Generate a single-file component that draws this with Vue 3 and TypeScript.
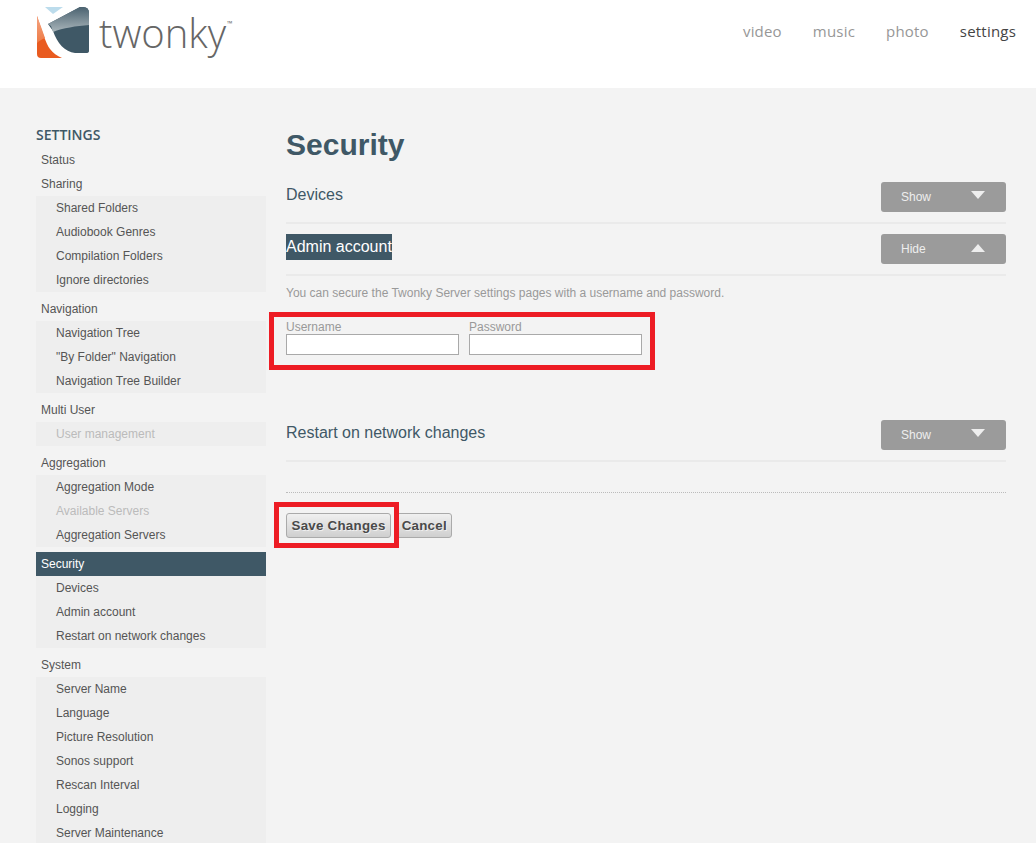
<script setup lang="ts">
interface Group {
  label: string
  active?: boolean
  items?: { label: string; disabled?: boolean }[]
}
const groups: Group[] = [
  { label: 'Status' },
  { label: 'Sharing', items: [{ label: 'Shared Folders' }, { label: 'Audiobook Genres' }, { label: 'Compilation Folders' }, { label: 'Ignore directories' }] },
  { label: 'Navigation', items: [{ label: 'Navigation Tree' }, { label: '"By Folder" Navigation' }, { label: 'Navigation Tree Builder' }] },
  { label: 'Multi User', items: [{ label: 'User management', disabled: true }] },
  { label: 'Aggregation', items: [{ label: 'Aggregation Mode' }, { label: 'Available Servers', disabled: true }, { label: 'Aggregation Servers' }] },
  { label: 'Security', active: true, items: [{ label: 'Devices' }, { label: 'Admin account' }, { label: 'Restart on network changes' }] },
  { label: 'System', items: [{ label: 'Server Name' }, { label: 'Language' }, { label: 'Picture Resolution' }, { label: 'Sonos support' }, { label: 'Rescan Interval' }, { label: 'Logging' }, { label: 'Server Maintenance' }] },
]
const nav = ['video', 'music', 'photo', 'settings']
</script>

<template>
  <div class="page">
    <header class="top">
      <div class="logo">
        <svg class="mark" width="54" height="53" viewBox="36 6 54 53">
          <defs>
            <linearGradient id="gr" x1="0" y1="0" x2="0" y2="1">
              <stop offset="0" stop-color="#4a6270" />
              <stop offset="1" stop-color="#a9b5ba" />
            </linearGradient>
            <linearGradient id="or" x1="0" y1="0" x2="0" y2="1">
              <stop offset="0" stop-color="#f4a582" />
              <stop offset="1" stop-color="#ee7a45" />
            </linearGradient>
          </defs>
          <path d="M45 7H63L53 14Z" fill="#bcdcec" />
          <path d="M48 24L80 7H83Q89 7 89 13V51Q89 53 86 53H75C65 52 57 43 53 31Z" fill="#3f5866" />
          <path d="M48 24L80 7H83Q89 7 89 13V25C76 26 63 28 53 32L51 26Z" fill="url(#gr)" />
          <path d="M37 16C41 28 46 44 50 49C53 53 57 56 62 58H41Q37 58 37 54Z" fill="#e95b20" />
          <path d="M37 16C40 24 43 32 45 38C42 39 39 41 37 43Z" fill="url(#or)" />
        </svg>
        <span class="word">twonky<sup class="tm">™</sup></span>
      </div>
      <nav class="nav">
        <a v-for="n in nav" :key="n" :class="{ on: n === 'settings' }">{{ n }}</a>
      </nav>
    </header>

    <div class="body">
      <aside class="side">
        <h3 class="side-title">SETTINGS</h3>
        <div v-for="g in groups" :key="g.label" class="group">
          <div class="row" :class="{ active: g.active }">{{ g.label }}</div>
          <div v-if="g.items" class="sub">
            <div v-for="i in g.items" :key="i.label" class="subrow" :class="{ off: i.disabled }">{{ i.label }}</div>
          </div>
        </div>
      </aside>

      <main class="main">
        <h1 class="title">Security</h1>

        <section class="sec first">
          <span class="sec-name">Devices</span>
          <button class="toggle"><span>Show</span><i class="tri down"></i></button>
        </section>

        <section class="sec second">
          <span class="sec-name picked">Admin account</span>
          <button class="toggle"><span>Hide</span><i class="tri up"></i></button>
        </section>

        <p class="hint">You can secure the Twonky Server settings pages with a username and password.</p>

        <div class="fields">
          <label class="field"><span>Username</span><input type="text" /></label>
          <label class="field"><span>Password</span><input type="password" /></label>
        </div>

        <section class="sec third">
          <span class="sec-name">Restart on network changes</span>
          <button class="toggle"><span>Show</span><i class="tri down"></i></button>
        </section>

        <div class="dots"></div>

        <div class="actions">
          <button class="act">Save Changes</button>
          <button class="act">Cancel</button>
        </div>
      </main>
    </div>

    <div class="mark-box box-a"></div>
    <div class="mark-box box-b"></div>
  </div>
</template>

<style>
html, body { margin: 0; overflow: hidden; background: #f3f3f3; }
</style>

<style scoped>
.page {
  position: relative;
  height: 843px;
  overflow: hidden;
  background: #f3f3f3;
  font-family: "Liberation Sans", Arial, sans-serif;
}
.top {
  height: 88px;
  background: #fff;
  display: flex;
  justify-content: space-between;
  align-items: flex-start;
  padding: 0 20px 0 36px;
}
.logo { display: flex; align-items: flex-start; padding-top: 6px; }
.mark { display: block; }
.word {
  font-family: "Open Sans", sans-serif;
  font-weight: 300;
  font-size: 40px;
  line-height: 54px;
  color: #666;
  margin-left: 9px;
  margin-top: 0;
  position: relative;
}
.tm { position: absolute; font-size: 7px; line-height: 8px; top: 14px; left: 128px; font-weight: 400; }
.nav { display: flex; gap: 31px; padding-top: 21px; }
.nav a {
  font-family: "Open Sans", sans-serif;
  font-size: 15px;
  line-height: 20px;
  color: #979797;
  letter-spacing: 0.2px;
}
.nav a.on { color: #444; }

.body { display: flex; padding: 0 30px 0 36px; }
.side { width: 230px; flex: none; margin-right: 20px; padding-top: 36px; }
.side-title {
  margin: 0 0 2px;
  font-family: "Open Sans", sans-serif;
  font-size: 14px;
  font-weight: 600;
  line-height: 22px;
  color: #3f5866;
}
.group { margin-bottom: 5px; }
.group:nth-child(2) { margin-bottom: 0; }
.row, .subrow { height: 24px; line-height: 24px; font-size: 12px; color: #555; }
.row { padding-left: 5px; }
.row.active { background: #3f5866; color: #fff; }
.sub { background: #eeeeee; }
.subrow { padding-left: 20px; }
.subrow.off { color: #bbb; }

.main { flex: 1; min-width: 0; }
.title {
  margin: 0;
  padding-top: 38px;
  font-size: 30px;
  line-height: 38px;
  font-weight: 700;
  color: #3f5866;
}
.sec {
  display: flex;
  justify-content: space-between;
  align-items: flex-start;
  border-bottom: 2px solid #eaeaea;
  padding-bottom: 10px;
}
.sec.first { margin-top: 18px; }
.sec.second { margin-top: 10px; }
.sec.third { margin-top: 65px; }
.sec-name { font-size: 16px; line-height: 26px; color: #3f5866; }
.sec-name.picked { background: #3f5866; color: #fff; }
.toggle {
  width: 125px;
  height: 30px;
  border: 0;
  border-radius: 3px;
  background: #9b9b9b;
  color: #eee;
  font: 12px "Liberation Sans", Arial, sans-serif;
  display: flex;
  align-items: center;
  justify-content: space-between;
  padding: 0 21px 0 20px;
}
.tri { width: 0; height: 0; border-left: 7px solid transparent; border-right: 7px solid transparent; }
.tri.down { border-top: 8px solid #eee; margin-bottom: 4px; }
.tri.up { border-bottom: 8px solid #eee; margin-bottom: 3px; }
.hint { margin: 10px 0 0; font-size: 12px; line-height: 14px; color: #999; }
.fields { display: flex; gap: 10px; margin-top: 20px; }
.field { display: flex; flex-direction: column; width: 173px; }
.field span { font-size: 12px; line-height: 14px; color: #999; }
.field input {
  box-sizing: border-box;
  width: 173px;
  height: 21px;
  margin: 0;
  padding: 0 2px;
  border: 1px solid #a9a9a9;
  background: #fff;
  outline: 0;
}
.dots { border-top: 1px dotted #bbb; margin-top: 30px; }
.actions { display: flex; gap: 5px; margin-top: 20px; }
.act {
  height: 25px;
  padding: 0 4.5px;
  border: 1px solid #aaa;
  border-radius: 3px;
  background: linear-gradient(#f0f0f0, #cfcfcf);
  color: #4a4a4a;
  font: bold 13.33px "Liberation Sans", Arial, sans-serif;
  letter-spacing: 0.25px;
  text-shadow: 1px 1px 0 rgba(255, 255, 255, 0.6);
}
.mark-box { position: absolute; box-sizing: border-box; border: 5px solid #ed1c24; pointer-events: none; }
.box-a { left: 269px; top: 312px; width: 386px; height: 58px; }
.box-b { left: 274px; top: 502px; width: 125px; height: 46px; }
</style>
